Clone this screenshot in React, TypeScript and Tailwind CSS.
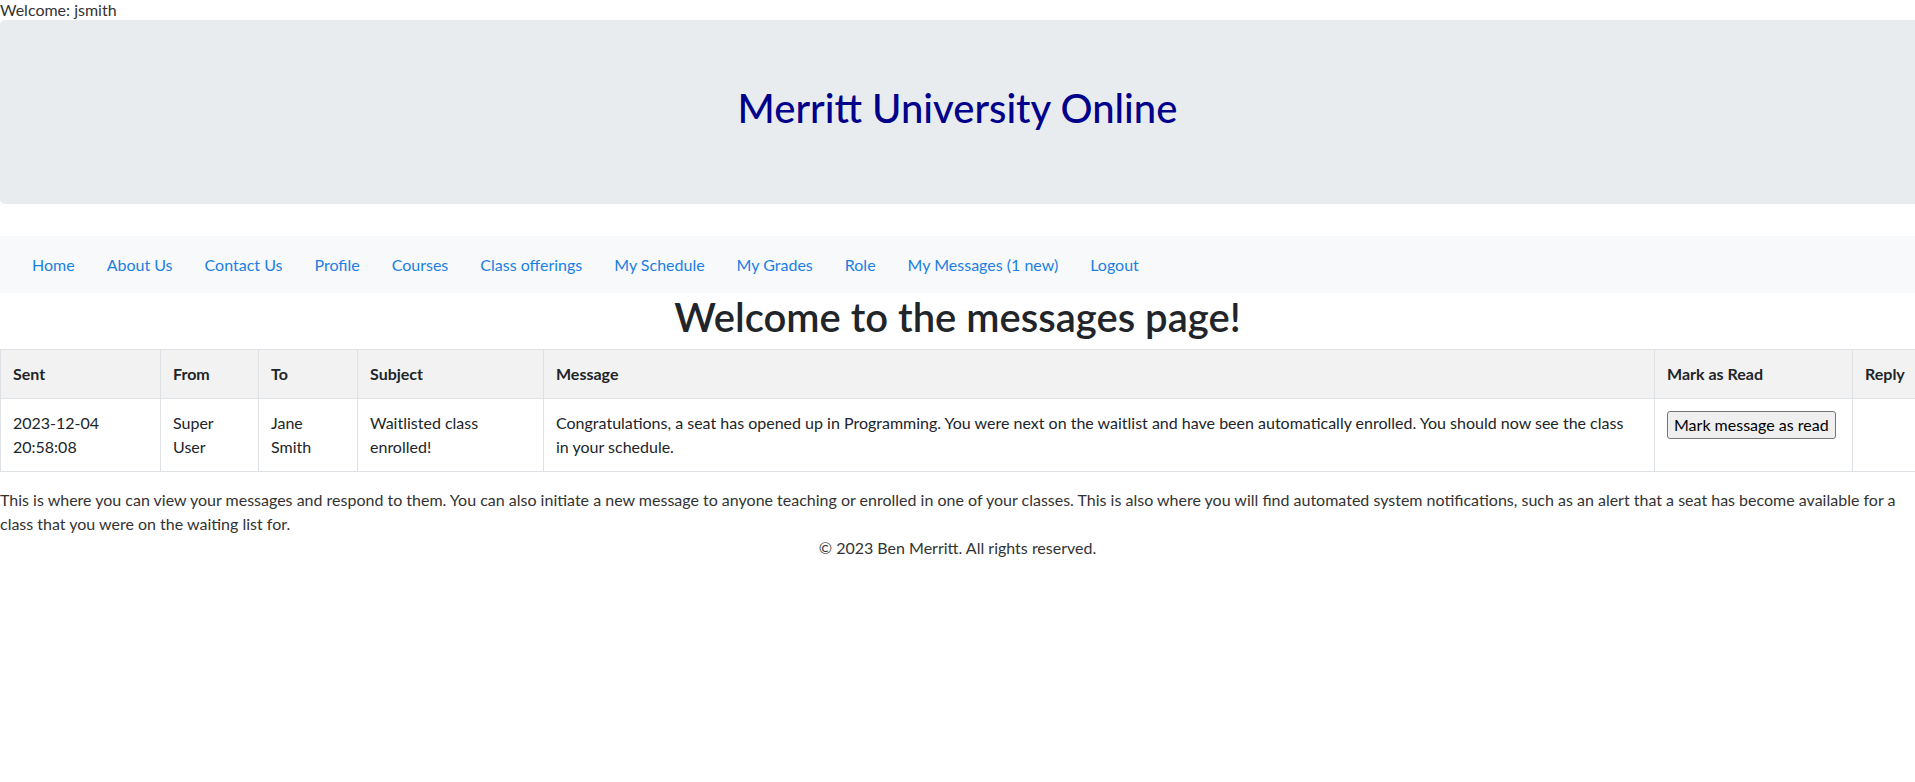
import React from "react";

const navLinks = [
  "Home",
  "About Us",
  "Contact Us",
  "Profile",
  "Courses",
  "Class offerings",
  "My Schedule",
  "My Grades",
  "Role",
  "My Messages (1 new)",
  "Logout",
];

const font = { fontFamily: "Lato, 'Liberation Sans', sans-serif" };

export default function App() {
  return (
    <div className="w-[1915px] overflow-hidden bg-white text-[16px] text-[#212529]" style={font}>
      <div className="h-[20px] leading-[20px] text-[#333]">Welcome: jsmith</div>

      <div className="mb-[32px] rounded-l-[5px] bg-[#e9ecef] px-[32px] pb-[64px] pt-[64px]">
        <h1 className="mb-[8px] text-center text-[40px] font-medium leading-[48px] text-[#00008b]">
          Merritt University Online
        </h1>
      </div>

      <nav className="flex h-[57px] items-center bg-[#f8f9fa] px-[16px]">
        {navLinks.map((l) => (
          <a key={l} href="#" className="px-[16px] py-[8px] leading-[24px] text-[#1b7fe3]">
            {l}
          </a>
        ))}
      </nav>

      <h1 className="mb-[8px] text-center text-[40px] font-semibold leading-[48px] text-[#212529]">
        Welcome to the messages page!
      </h1>

      <table className="mb-[16px] w-[1935px] table-fixed border-collapse border border-[#dee2e6] text-left leading-[24px]">
        <colgroup>
          <col className="w-[160px]" />
          <col className="w-[98px]" />
          <col className="w-[99px]" />
          <col className="w-[186px]" />
          <col className="w-[1111px]" />
          <col className="w-[198px]" />
          <col className="w-[83px]" />
        </colgroup>
        <thead>
          <tr className="bg-[#f2f2f2]">
            {["Sent", "From", "To", "Subject", "Message", "Mark as Read", "Reply"].map((h) => (
              <th key={h} className="border border-[#dee2e6] p-[12px] align-top font-bold">
                {h}
              </th>
            ))}
          </tr>
        </thead>
        <tbody>
          <tr>
            <td className="border border-[#dee2e6] p-[12px] align-top">
              2023-12-04 20:58:08
            </td>
            <td className="border border-[#dee2e6] p-[12px] align-top">Super User</td>
            <td className="border border-[#dee2e6] p-[12px] align-top">Jane Smith</td>
            <td className="border border-[#dee2e6] p-[12px] align-top">Waitlisted class enrolled!</td>
            <td className="border border-[#dee2e6] p-[12px] align-top">
              Congratulations, a seat has opened up in Programming. You were next on the waitlist
              and have been automatically enrolled. You should now see the class
              <br />
              in your schedule.
            </td>
            <td className="border border-[#dee2e6] p-[12px] align-top">
              <button className="rounded-[3px] border border-[#767676] bg-[#efefef] px-[6px] py-[1px] leading-[24px] text-black">
                Mark message as read
              </button>
            </td>
            <td className="border border-[#dee2e6] p-[12px] align-top"></td>
          </tr>
        </tbody>
      </table>

      <p className="w-[1960px] leading-[24px] text-[#333]">
        This is where you can view your messages and respond to them. You can also initiate a new
        message to anyone teaching or enrolled in one of your classes. This is also where you will
        find automated system notifications, such as an alert that a seat has become available for a
        <br />
        class that you were on the waiting list for.
      </p>

      <footer className="text-center leading-[24px] text-[#333]">
        © 2023 Ben Merritt. All rights reserved.
      </footer>
      <div className="h-[230px]" />
    </div>
  );
}
